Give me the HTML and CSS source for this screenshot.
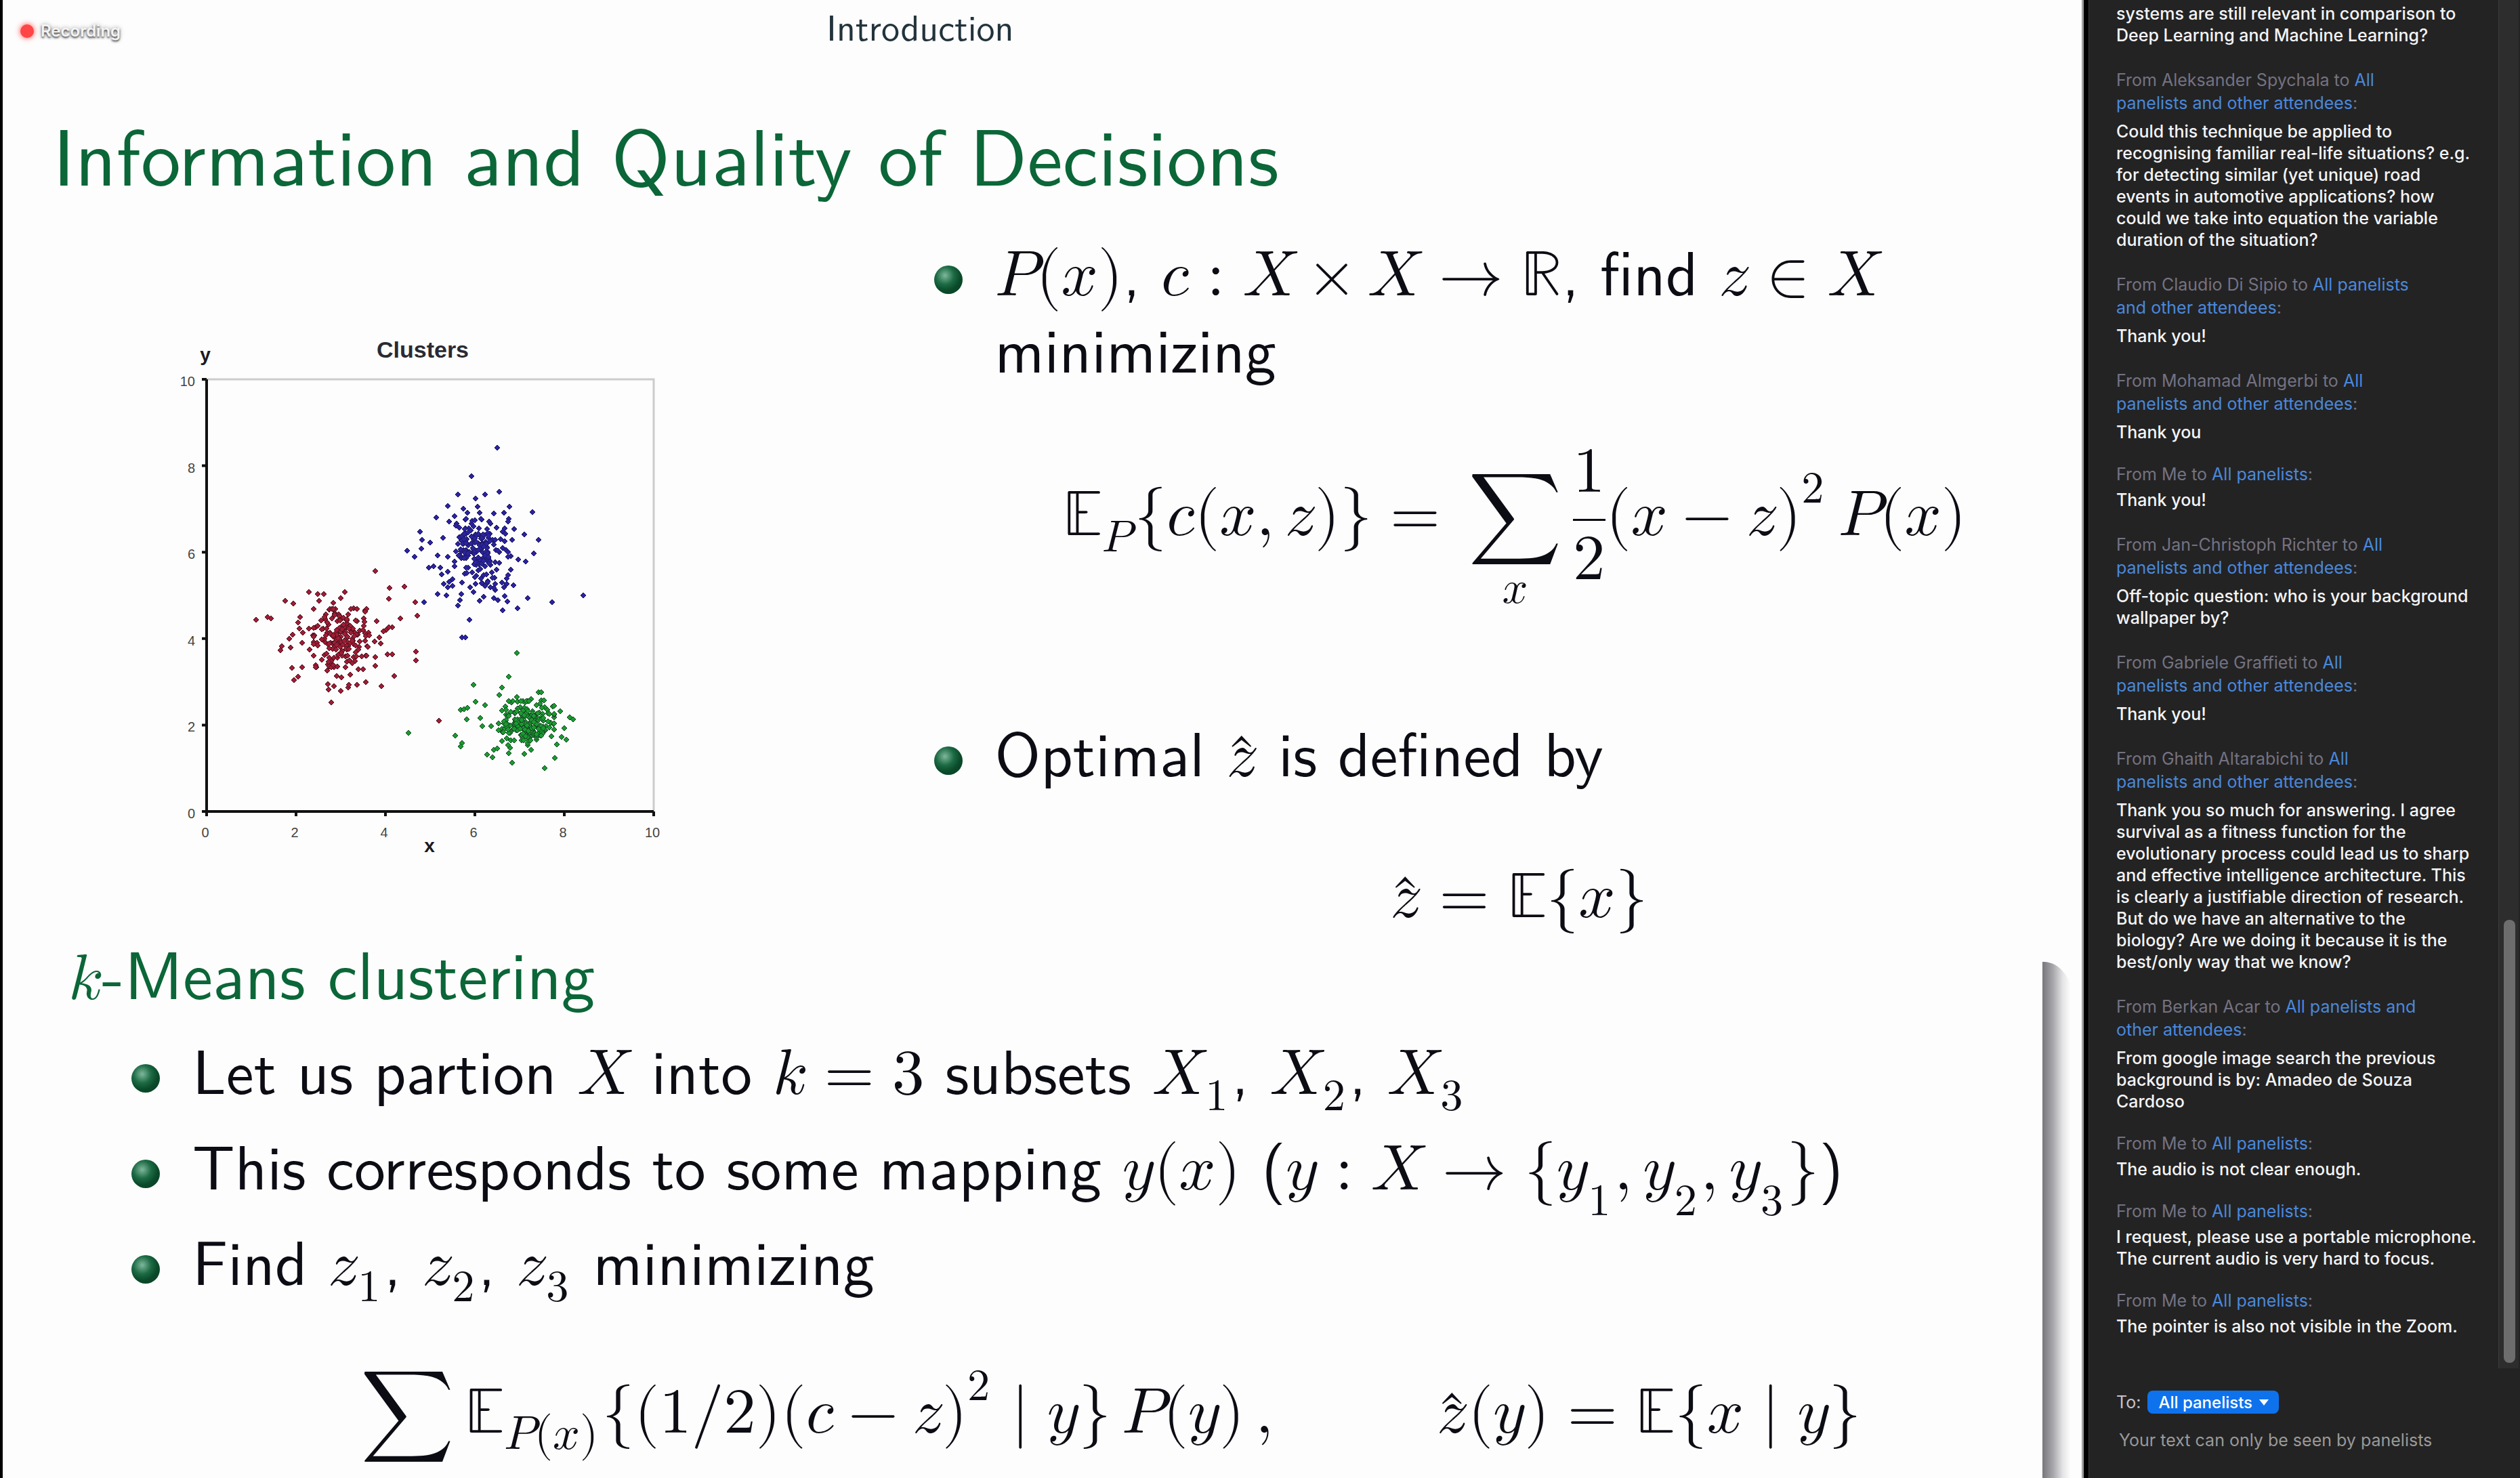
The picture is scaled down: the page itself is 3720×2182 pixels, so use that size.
FILE: index.html
```html
<!DOCTYPE html>
<html lang="en">
<head>
<meta charset="utf-8">
<title>Webinar – Information and Quality of Decisions</title>
<link rel="stylesheet" href="styles.css">
</head>
<body>
<div class="app">
  <main class="stage">
    <div class="recording"><span class="recording-dot"></span>Recording</div>
    <article class="slide">
      <p class="section">Introduction</p>
      <h1 class="title">Information and Quality of Decisions</h1>
      <div class="columns">
        <svg class="chart" id="chart" viewBox="0 0 760 800" role="img" aria-label="Clusters"></svg>
        <ul class="points">
          <li class="point">
            <span class="line"><math><mi>P</mi><mo stretchy="false">(</mo><mi>x</mi><mo stretchy="false">)</mo></math>, <math><mi>c</mi><mo lspace="0.278em" rspace="0.278em">:</mo><mi>X</mi><mo>×</mo><mi>X</mi><mo stretchy="false">→</mo><mi>ℝ</mi></math>, find <math><mi>z</mi><mo>∈</mo><mi>X</mi></math></span>
            <span class="line">minimizing</span>
          </li>
          <li class="formula formula-cost">
            <math display="block"><msub><mi>𝔼</mi><mi>P</mi></msub><mo stretchy="false">{</mo><mi>c</mi><mo stretchy="false">(</mo><mi>x</mi><mo>,</mo><mi>z</mi><mo stretchy="false">)</mo><mo stretchy="false">}</mo><mo>=</mo><munder><mo>∑</mo><mi>x</mi></munder><mfrac><mn>1</mn><mn>2</mn></mfrac><mo stretchy="false">(</mo><mi>x</mi><mo>−</mo><mi>z</mi><msup><mo stretchy="false">)</mo><mn>2</mn></msup><mspace width="0.167em"></mspace><mi>P</mi><mo stretchy="false">(</mo><mi>x</mi><mo stretchy="false">)</mo></math>
          </li>
          <li class="point">
            <span class="line">Optimal <math><mover accent="true"><mi>z</mi><mo stretchy="false">ˆ</mo></mover></math> is defined by</span>
          </li>
          <li class="formula formula-mean">
            <math display="block"><mover accent="true"><mi>z</mi><mo stretchy="false">ˆ</mo></mover><mo>=</mo><mi>𝔼</mi><mo stretchy="false">{</mo><mi>x</mi><mo stretchy="false">}</mo></math>
          </li>
        </ul>
      </div>
      <h2 class="subtitle"><math><mi>k</mi></math>-Means clustering</h2>
      <ul class="steps">
        <li class="point"><span class="line">Let us partion <math><mi>X</mi></math> into <math><mi>k</mi><mo>=</mo><mn>3</mn></math> subsets <math><msub><mi>X</mi><mn>1</mn></msub></math>, <math><msub><mi>X</mi><mn>2</mn></msub></math>, <math><msub><mi>X</mi><mn>3</mn></msub></math></span></li>
        <li class="point"><span class="line">This corresponds to some mapping <math><mi>y</mi><mo stretchy="false">(</mo><mi>x</mi><mo stretchy="false">)</mo></math> (<math><mi>y</mi><mo lspace="0.278em" rspace="0.278em">:</mo><mi>X</mi><mo stretchy="false">→</mo><mo stretchy="false">{</mo><msub><mi>y</mi><mn>1</mn></msub><mo>,</mo><msub><mi>y</mi><mn>2</mn></msub><mo>,</mo><msub><mi>y</mi><mn>3</mn></msub><mo stretchy="false">}</mo></math>)</span></li>
        <li class="point"><span class="line">Find <math><msub><mi>z</mi><mn>1</mn></msub></math>, <math><msub><mi>z</mi><mn>2</mn></msub></math>, <math><msub><mi>z</mi><mn>3</mn></msub></math> minimizing</span></li>
      </ul>
      <div class="formula-row">
        <math display="block"><mo>∑</mo><msub><mi>𝔼</mi><mrow><mi>P</mi><mo stretchy="false">(</mo><mi>x</mi><mo stretchy="false">)</mo></mrow></msub><mo stretchy="false">{</mo><mo stretchy="false">(</mo><mn>1</mn><mo lspace="0" rspace="0">/</mo><mn>2</mn><mo stretchy="false">)</mo><mo stretchy="false">(</mo><mi>c</mi><mo>−</mo><mi>z</mi><msup><mo stretchy="false">)</mo><mn>2</mn></msup><mo stretchy="false" lspace="0.278em" rspace="0.278em">|</mo><mi>y</mi><mo stretchy="false">}</mo><mspace width="0.167em"></mspace><mi>P</mi><mo stretchy="false">(</mo><mi>y</mi><mo stretchy="false">)</mo><mspace width="0.167em"></mspace><mo>,</mo></math>
        <math display="block"><mover accent="true"><mi>z</mi><mo stretchy="false">ˆ</mo></mover><mo stretchy="false">(</mo><mi>y</mi><mo stretchy="false">)</mo><mo>=</mo><mi>𝔼</mi><mo stretchy="false">{</mo><mi>x</mi><mo stretchy="false" lspace="0.278em" rspace="0.278em">|</mo><mi>y</mi><mo stretchy="false">}</mo></math>
      </div>
    </article>
    <div class="edge-shadow"></div>
  </main>
  <aside class="chat">
    <div class="chat-scroll">
      <div class="messages">
        <section class="message">
          <p class="text">systems are still relevant in comparison to<br>Deep Learning and Machine Learning?</p>
        </section>
        <section class="message">
          <p class="from from-wrapped">From Aleksander Spychala to <a href="#">All<br>panelists and other attendees</a>:</p>
          <p class="text">Could this technique be applied to<br>recognising familiar real-life situations? e.g.<br>for detecting similar (yet unique) road<br>events in automotive applications? how<br>could we take into equation the variable<br>duration of the situation?</p>
        </section>
        <section class="message">
          <p class="from from-wrapped">From Claudio Di Sipio to <a href="#">All panelists<br>and other attendees</a>:</p>
          <p class="text">Thank you!</p>
        </section>
        <section class="message">
          <p class="from from-wrapped">From Mohamad Almgerbi to <a href="#">All<br>panelists and other attendees</a>:</p>
          <p class="text">Thank you</p>
        </section>
        <section class="message">
          <p class="from">From Me to <a href="#">All panelists</a>:</p>
          <p class="text">Thank you!</p>
        </section>
        <section class="message">
          <p class="from from-wrapped">From Jan-Christoph Richter to <a href="#">All<br>panelists and other attendees</a>:</p>
          <p class="text">Off-topic question: who is your background<br>wallpaper by?</p>
        </section>
        <section class="message">
          <p class="from from-wrapped">From Gabriele Graffieti to <a href="#">All<br>panelists and other attendees</a>:</p>
          <p class="text">Thank you!</p>
        </section>
        <section class="message">
          <p class="from from-wrapped">From Ghaith Altarabichi to <a href="#">All<br>panelists and other attendees</a>:</p>
          <p class="text">Thank you so much for answering. I agree<br>survival as a fitness function for the<br>evolutionary process could lead us to sharp<br>and effective intelligence architecture. This<br>is clearly a justifiable direction of research.<br>But do we have an alternative to the<br>biology? Are we doing it because it is the<br>best/only way that we know?</p>
        </section>
        <section class="message">
          <p class="from from-wrapped">From Berkan Acar to <a href="#">All panelists and<br>other attendees</a>:</p>
          <p class="text">From google image search the previous<br>background is by: Amadeo de Souza<br>Cardoso</p>
        </section>
        <section class="message">
          <p class="from">From Me to <a href="#">All panelists</a>:</p>
          <p class="text">The audio is not clear enough.</p>
        </section>
        <section class="message">
          <p class="from">From Me to <a href="#">All panelists</a>:</p>
          <p class="text">I request, please use a portable microphone.<br>The current audio is very hard to focus.</p>
        </section>
        <section class="message">
          <p class="from">From Me to <a href="#">All panelists</a>:</p>
          <p class="text">The pointer is also not visible in the Zoom.</p>
        </section>
      </div>
      <div class="track"><div class="thumb"></div></div>
    </div>
    <form class="composer">
      <div class="recipient">
        <label for="to">To:</label>
        <span class="select-wrap">
          <select id="to"><option>All panelists</option></select>
          <svg class="caret" viewBox="0 0 14 9" aria-hidden="true"><path d="M0 0h14L7 9z" fill="#fff"/></svg>
        </span>
      </div>
      <input class="entry" type="text" aria-label="Message" placeholder="Your text can only be seen by panelists">
    </form>
  </aside>
</div>
<script src="chart.js"></script>
</body>
</html>
```
FILE: styles.css
```css
* { box-sizing: border-box; }

body {
  margin: 0;
  background: #000;
  font-family: Inter, "Liberation Sans", sans-serif;
}

h1, h2, p, ul { margin: 0; padding: 0; font-weight: 400; }
ul { list-style: none; }

.app {
  display: grid;
  grid-template-columns: minmax(0, 1fr) 637px;
  height: 100vh;
  overflow: hidden;
}

/* Shared screen */
.stage {
  position: relative;
  margin: 0 7px 0 4px;
  border-right: 3px solid #a0a0a0;
  background: #fdfdfd;
  overflow: hidden;
}

.recording {
  position: absolute;
  top: 28px;
  left: 26px;
  display: flex;
  align-items: center;
  gap: 10px;
  color: #f4f4f4;
  font-size: 24px;
  font-weight: 600;
  line-height: 36px;
  text-shadow: 0 2px 3px rgba(0, 0, 0, .7), 0 0 6px rgba(0, 0, 0, .35);
}

.recording-dot {
  width: 20px;
  height: 20px;
  border-radius: 50%;
  background: #ff4545;
  box-shadow: 0 0 8px #ff4545;
}

.slide {
  padding-top: 4px;
  color: #0c0c14;
  font-family: "Latin Modern Sans", Lato, "Liberation Sans", sans-serif;
  font-size: 92px;
  line-height: 114px;
}

.slide math {
  font-family: "Latin Modern Math", "Liberation Serif", serif;
  font-size: 95px;
}

.slide msub > mrow { font-size: 70px; }

.section {
  padding-left: 1216px;
  color: #22333b;
  font-size: 54px;
  line-height: 68px;
}

.title {
  margin-top: 80px;
  padding-left: 74px;
  color: #0b6638;
  font-size: 118px;
  line-height: 144px;
}

.columns {
  display: grid;
  grid-template-columns: 1375fr 1695fr;
  align-items: start;
  margin-top: 44px;
}

.chart {
  width: 760px;
  margin: 140px 0 0 236px;
}

.point {
  position: relative;
  padding-left: 90px;
  white-space: nowrap;
}

.point::before {
  content: "";
  position: absolute;
  top: 52px;
  left: 0;
  width: 42px;
  height: 42px;
  border-radius: 50%;
  background: radial-gradient(circle at 38% 35%, #7fb89c 0, #1d6b45 35%, #0a4a2a 60%, #063d20 100%);
}

.line { display: block; height: 114px; }

.formula-cost { margin: 94px 0 160px; padding-left: 190px; }
.formula-mean { margin-top: 118px; padding-left: 672px; }
.formula math, .formula-row math { margin: 0; width: max-content; }

.subtitle {
  padding-left: 97px;
  color: #0b6638;
  font-size: 99px;
  line-height: 112px;
}

.steps {
  display: grid;
  gap: 27px;
  margin: 29px 0 0 190px;
}

.formula-row {
  display: flex;
  align-items: baseline;
  gap: 224px;
  margin: 108px 0 0 513px;
}

.edge-shadow {
  position: absolute;
  top: 1420px;
  right: 12px;
  bottom: 0;
  width: 46px;
  border-top-right-radius: 44px 60px;
  background: linear-gradient(90deg, #77777b 0, #a9a9ad 35%, #e4e4e6 65%, #fdfdfd 90%);
}

/* Chat panel */
.chat {
  display: flex;
  flex-direction: column;
  border-left: 1px solid #3a3a3a;
  background: #232323;
  font-size: 25px;
}

.chat-scroll {
  display: flex;
  flex: 1;
  min-height: 0;
}

.messages {
  display: flex;
  flex: 1;
  flex-direction: column;
  gap: 29px;
  padding: 4px 0 0 40px;
  overflow: hidden;
  white-space: nowrap;
}

.from { color: #747282; line-height: 34px; }
.from-wrapped { padding: 4px 0; }
.from a { color: #4a88dc; text-decoration: none; }

.text {
  margin-top: 5px;
  color: #f4f4f6;
  font-weight: 500;
  line-height: 32px;
}

.message:first-child .text { margin-top: 0; }

.track {
  display: flex;
  flex-direction: column;
  justify-content: flex-end;
  width: 30px;
  margin-right: 2px;
  padding: 8px 5px 8px 7px;
  border-left: 1px solid #3c3c3c;
  background: #2d2d2d;
}

.thumb {
  height: 654px;
  border-radius: 8px;
  background: #6d6d6d;
}

.composer {
  padding: 32px 40px 38px;
}

.recipient {
  display: flex;
  align-items: center;
  gap: 10px;
  height: 36px;
  color: #c4c2cc;
}

.select-wrap { position: relative; display: flex; }

.select-wrap select {
  width: 194px;
  height: 34px;
  padding: 0 0 0 16px;
  border: 0;
  border-radius: 8px;
  appearance: none;
  background: #0e72ed;
  color: #fff;
  font: 500 24px Inter, "Liberation Sans", sans-serif;
}

.caret {
  position: absolute;
  top: 13px;
  right: 15px;
  width: 14px;
  height: 9px;
  pointer-events: none;
}

.entry {
  width: 100%;
  height: 36px;
  margin-top: 20px;
  padding: 0 4px;
  border: 0;
  outline: 0;
  background: none;
  color: #f4f4f6;
  font: 400 25px Inter, "Liberation Sans", sans-serif;
}

.entry::placeholder { color: #999; opacity: 1; }

/* Chart */
.axis { fill: none; stroke: #111; stroke-width: 4; }
.frame { fill: none; stroke: #ccc; stroke-width: 3; }
.tick { fill: #444; font: 20px "Liberation Sans", sans-serif; }
.label { fill: #1a1a22; font: 700 28px "Liberation Sans", sans-serif; }
.heading { fill: #2a2a34; font: 700 34px "Liberation Sans", sans-serif; }
.dot { stroke-width: 1; }
.dot-blue { fill: #2b23a0; stroke: #1d1a60; }
.dot-red { fill: #a01c34; stroke: #4a1420; }
.dot-green { fill: #1a9a30; stroke: #174a24; }
```
FILE: chart.js
```
// Scatter plot of the three clusters. Axis ranges are 0–10 on both sides.
const chart = document.getElementById('chart');
const NS = 'http://www.w3.org/2000/svg';
const left = 65, right = 725, ceiling = 80, floor = 718;

function add(name, attrs, text) {
  const el = document.createElementNS(NS, name);
  for (const key in attrs) el.setAttribute(key, attrs[key]);
  if (text !== undefined) el.textContent = text;
  chart.append(el);
}

add('path', { class: 'frame', d: `M${left} ${ceiling}H${right}V${floor}` });
let axes = `M${left} ${ceiling}V${floor}H${right}`;
for (let v = 0; v <= 10; v += 2) {
  const x = left + (right - left) * v / 10;
  const y = floor - (floor - ceiling) * v / 10;
  axes += `M${left - 7} ${y}h7M${x} ${floor}v7`;
  add('text', { class: 'tick', x: x - 2, y: floor + 38, 'text-anchor': 'middle' }, v);
  add('text', { class: 'tick', x: left - 17, y: y + 10, 'text-anchor': 'end' }, v);
}
add('path', { class: 'axis', d: axes });
add('text', { class: 'heading', x: 384, y: 48, 'text-anchor': 'middle' }, 'Clusters');
add('text', { class: 'label', x: 63, y: 53, 'text-anchor': 'middle' }, 'y');
add('text', { class: 'label', x: 394, y: 778, 'text-anchor': 'middle' }, 'x');

// Outlying samples, in 1/1568 of the chart box.
const outer = {
  blue: '1020,355 940,438 900,490 868,523 954,501 982,490 1026,482 916,532 959,526 1008,545 1057,526 1126,541 1055,560 834,556 783,597 791,622 814,630 788,646 744,653 767,671 810,702 825,697 846,702 837,667 850,722 1102,605 1071,590 1064,622 1145,622 1130,660 1106,685 1083,679 1060,668 1047,650 1060,708 1048,734 1068,752 1033,744 837,778 865,782 857,748 910,778 899,812 905,795 946,773 978,786 965,797 1008,790 1021,795 1041,784 1051,800 1036,826 1082,819 1113,790 1187,801 1281,782 934,853 911,904 922,904 797,801 890,553 896,575 1030,620 855,615 884,735 884,755 1014,766 1008,760 988,747 953,748 970,733',
  red: '648,711 692,760 736,756 689,791 770,801 776,841 724,849 651,856 772,944 772,970 841,1144 705,1015 700,952 685,952 667,1044 647,985 647,960 619,1033 593,1041 572,1011 566,1048 542,1059 514,1092 522,1045 506,1055 503,1038 530,1015 545,1019 502,1000 503,982 413,1018 401,1027 394,991 426,989 358,941 363,930 389,933 396,895 385,908 331,849 320,845 284,853 373,797 398,805 445,773 472,778 490,778 476,797 520,804 543,790 554,773 581,819 616,826 612,849 612,870 498,836 495,850 418,845 412,860 700,874 690,875 680,882 672,886 661,904 665,922 646,915 624,930 619,957 627,890 425,919 448,938 460,918 445,878 457,897 416,878 427,890 484,968 596,996 610,996 568,1040',
  green: '1079,948 1055,1018 946,1041 1033,1048 1026,1070 1079,1077 1145,1062 1153,1062 1122,1081 954,1089 982,1100 908,1114 918,1111 929,1107 927,1141 892,1188 911,1209 908,1219 748,1179 1189,1103 1172,1113 1212,1118 1240,1134 1251,1141 1223,1166 1215,1192 1230,1199 1201,1214 1195,1252 1163,1281 1101,1241 1064,1267 1055,1238 1058,1224 988,1242 1005,1250 1008,1228 1020,1225 1154,1085 1162,1085 1150,1096 968,1136 974,1160 1000,1160 1122,1228 1190,1154 1043,1103 1033,1115'
};

// Dense cores: centre, spread and sample count in the same units.
const cores = [
  ['blue', 960, 650, 46, 54, 190],
  ['red', 545, 905, 42, 42, 170],
  ['green', 1108, 1152, 42, 32, 210]
];

let seed = 7;
const random = () => (seed = seed * 16807 % 2147483647) / 2147483647;
const normal = () => Math.sqrt(-2 * Math.log(random())) * Math.cos(2 * Math.PI * random());
const clamp = v => Math.max(-2, Math.min(2, v));

function dot(color, gx, gy) {
  const x = Math.round(gx * 760 / 1568), y = Math.round(gy * 800 / 1568);
  add('path', { class: `dot dot-${color}`, d: `M${x} ${y - 4}l4 4l-4 4l-4 -4z` });
}

for (const color in outer) {
  outer[color].split(' ').forEach(pair => dot(color, ...pair.split(',').map(Number)));
}
for (const [color, cx, cy, sx, sy, count] of cores) {
  for (let i = 0; i < count; i++) {
    dot(color, cx + clamp(normal()) * sx, cy + clamp(normal()) * sy);
  }
}
```
